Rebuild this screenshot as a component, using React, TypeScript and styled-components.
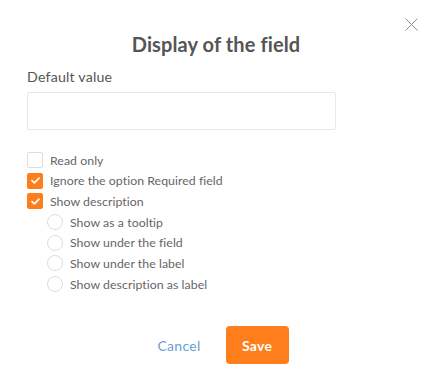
import React from "react";
import styled, { createGlobalStyle } from "styled-components";

const Global = createGlobalStyle`
  html, body { margin: 0; padding: 0; background: #fff; }
  body { font-family: Lato, "Open Sans", sans-serif; color: #555; }
  * { box-sizing: border-box; }
`;

const Dialog = styled.div`
  width: 432px;
  height: 389px;
  background: #fff;
  padding: 30px 27px 0 27px;
  display: flex;
  flex-direction: column;
  position: relative;
  font-family: Lato, sans-serif;
`;

const Close = styled.button`
  position: absolute;
  top: 18px;
  right: 14px;
  width: 13px;
  height: 13px;
  padding: 0;
  border: none;
  background: none;
  cursor: pointer;
  display: flex;
`;

const Title = styled.h2`
  margin: 0;
  text-align: center;
  font-size: 20px;
  font-weight: 700;
  color: #555;
  line-height: 28px;
  letter-spacing: 0.1px;
`;

const Label = styled.div`
  margin-top: 9px;
  font-size: 14.2px;
  color: #555;
  line-height: 20px;
  letter-spacing: 0.2px;
`;

const Input = styled.input`
  margin-top: 5px;
  width: 309px;
  height: 38px;
  border: 1px solid #e3e7ee;
  border-radius: 2px;
  outline: none;
  font: inherit;
`;

const Options = styled.div`
  margin-top: 22px;
  display: flex;
  flex-direction: column;
  gap: 4.7px;
`;

const Row = styled.label<{ $indent?: boolean }>`
  display: flex;
  align-items: center;
  gap: 7px;
  height: 16px;
  padding-left: ${(p) => (p.$indent ? "20px" : "0")};
  font-size: 12.3px;
  color: #666;
  letter-spacing: 0.05px;
`;

const Box = styled.span<{ $checked?: boolean }>`
  width: 16px;
  height: 16px;
  border-radius: 2px;
  flex: none;
  display: flex;
  align-items: center;
  justify-content: center;
  background: ${(p) => (p.$checked ? "#fd7e1a" : "#fff")};
  border: 1px solid ${(p) => (p.$checked ? "#fd7e1a" : "#d9dee6")};
`;

const Radio = styled.span`
  width: 16px;
  height: 16px;
  border-radius: 50%;
  flex: none;
  border: 1px solid #d9dee6;
  background: #fff;
`;

const Footer = styled.div`
  margin-top: 34px;
  display: flex;
  justify-content: center;
  align-items: center;
  gap: 25px;
  padding-left: 14px;
`;

const Cancel = styled.button`
  border: none;
  background: none;
  color: #6a9fd0;
  font-family: Lato, sans-serif;
  font-size: 14px;
  padding: 0;
  letter-spacing: 0.3px;
`;

const Save = styled.button`
  width: 63px;
  height: 38px;
  border: none;
  border-radius: 4px;
  background: #fd7e1a;
  color: #fff;
  font-family: Lato, sans-serif;
  font-size: 14px;
  font-weight: 700;
  letter-spacing: 0.3px;
`;

const Check = () => (
  <svg width="9" height="7" viewBox="0 0 9 7" fill="none">
    <path d="M1 3.6 L3.4 5.8 L8 1.2" stroke="#fff" strokeWidth="1.7" strokeLinecap="round" strokeLinejoin="round" />
  </svg>
);

export default function App() {
  return (
    <>
      <Global />
      <Dialog>
        <Close aria-label="Close">
          <svg width="13" height="13" viewBox="0 0 13 13">
            <path d="M0.5 0.5 L12.5 12.5 M12.5 0.5 L0.5 12.5" stroke="#8a8a8a" strokeWidth="1" />
          </svg>
        </Close>
        <Title>Display of the field</Title>
        <Label>Default value</Label>
        <Input />
        <Options>
          <Row><Box /> Read only</Row>
          <Row><Box $checked><Check /></Box> Ignore the option Required field</Row>
          <Row><Box $checked><Check /></Box> Show description</Row>
          <Row $indent><Radio /> Show as a tooltip</Row>
          <Row $indent><Radio /> Show under the field</Row>
          <Row $indent><Radio /> Show under the label</Row>
          <Row $indent><Radio /> Show description as label</Row>
        </Options>
        <Footer>
          <Cancel>Cancel</Cancel>
          <Save>Save</Save>
        </Footer>
      </Dialog>
    </>
  );
}
